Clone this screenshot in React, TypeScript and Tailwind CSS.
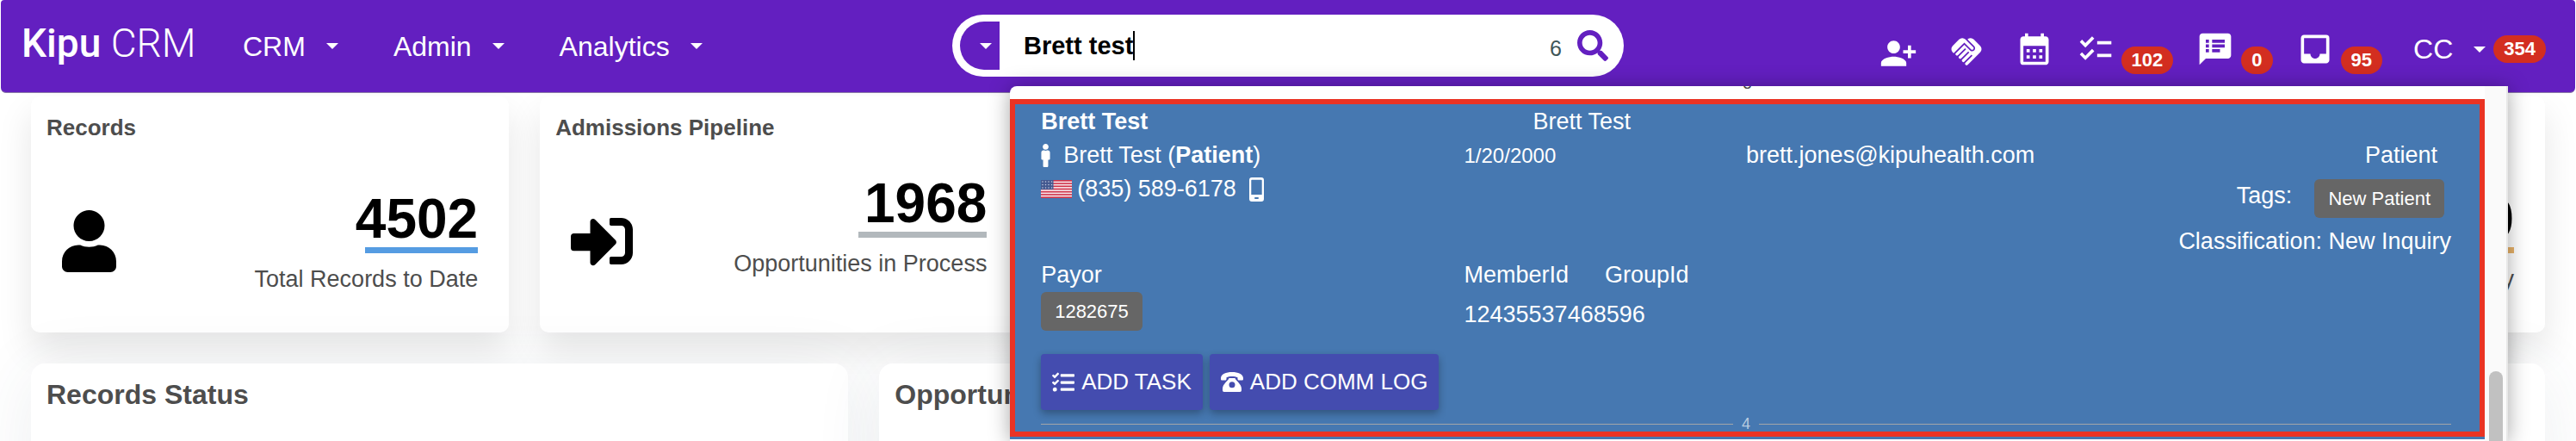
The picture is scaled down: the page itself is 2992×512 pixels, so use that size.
import React, { useState } from 'react';
import { FaMale, FaSearch, FaSignInAlt, FaTasks, FaUser } from 'react-icons/fa';
import {
  MdCalendarMonth,
  MdChecklist,
  MdHandshake,
  MdInbox,
  MdPersonAddAlt1,
  MdSpeakerNotes
} from 'react-icons/md';

interface StatCard {
  title?: string;
  icon?: React.ReactNode;
  value?: string;
  label?: string;
  barClass?: string;
  offsetClass?: string;
}

const menus = ['CRM', 'Admin', 'Analytics'];

const statCards: StatCard[] = [
  {
    title: 'Records',
    icon: <FaUser className="h-[72px] w-[63px]" />,
    value: '4502',
    label: 'Total Records to Date',
    barClass: 'w-[131px] bg-[#559ce2]',
    offsetClass: 'pt-[18px]'
  },
  {
    title: 'Admissions Pipeline',
    icon: <FaSignInAlt size={72} />,
    value: '1968',
    label: 'Opportunities in Process',
    barClass: 'w-[149px] bg-[#b2b8bc]',
    offsetClass: 'pt-0'
  },
  {},
  {},
  {
    value: '0',
    label: 'y',
    barClass: 'w-[131px] bg-[#e8b268]',
    offsetClass: 'pt-[18px]'
  }
];

const statusCards = ['Records Status', 'Opportunities', ''];

const Caret: React.FC = () => (
  <span className="h-0 w-0 border-x-[7px] border-t-[7px] border-x-transparent border-t-white" />
);

const Badge: React.FC<{ count: number; className: string }> = ({ count, className }) => (
  <span
    className={`h-8 rounded-full bg-[#d32e20] px-3 text-[22px] leading-8 font-bold text-white ${className}`}
  >
    {count}
  </span>
);

const Tag: React.FC<{ children: React.ReactNode }> = ({ children }) => (
  <span className="inline-block rounded-md bg-[#666666] px-4 text-[22px] leading-[45px]">
    {children}
  </span>
);

const UsFlag: React.FC = () => (
  <svg width="36" height="21" viewBox="0 0 36 21" aria-hidden="true">
    <rect width="36" height="21" fill="#f7e9ec" />
    {[0, 1, 2, 3, 4, 5, 6].map((i) => (
      <rect key={i} y={i * 3.23} width="36" height="1.62" fill="#d0344a" />
    ))}
    <rect width="14.5" height="11" fill="#43588f" />
    {[2, 5.5, 9].map((y) =>
      [2, 5.5, 9, 12.5].map((x) => <circle key={`${x}-${y}`} cx={x} cy={y} r="0.8" fill="#c3cbe0" />)
    )}
  </svg>
);

const MobileIcon: React.FC = () => (
  <svg width="17" height="28" viewBox="0 0 17 28" fill="white" aria-hidden="true">
    <path
      fillRule="evenodd"
      d="M3 0h11a3 3 0 0 1 3 3v22a3 3 0 0 1-3 3H3a3 3 0 0 1-3-3V3a3 3 0 0 1 3-3zM3 2.7a.7.7 0 0 0-.7.7V20h12.4V3.4a.7.7 0 0 0-.7-.7zM7 23a1 1 0 0 0 0 2h3a1 1 0 0 0 0-2z"
    />
  </svg>
);

const DeskPhoneIcon: React.FC = () => (
  <svg width="26" height="23" viewBox="0 0 26 23" fill="white" aria-hidden="true">
    <path d="M0 7C0 2.5 6 0 13 0s13 2.500 13 7v1c0 1-.6 1.500-1.500 1.500h-3.500c-1 0-1.500-.6-1.500-1.500V6.200C16 4.600 10 4.600 6.500 6.200V8c0 .9-.5 1.500-1.500 1.500H1.500C.6 9.500 0 9 0 8z" />
    <path
      fillRule="evenodd"
      d="M9.500 7h7c.5 2.500 7.500 7 7.500 12v2c0 1.200-.6 2-1.800 2H3.800C2.600 23 2 22.200 2 21v-2C2 14 9 9.500 9.500 7zM13 11.200a3.500 3.500 0 1 0 0 7 3.500 3.500 0 0 0 0-7z"
    />
  </svg>
);

const Header: React.FC = () => {
  const [query, setQuery] = useState('Brett test');

  return (
    <header className="relative z-10 mx-px grid h-[108px] grid-cols-[1fr_780px_1fr] rounded-t-sm rounded-b-md border-b border-[#8a7ba8] bg-[#631fc0] text-[32px] text-white">
      {/* Logo and menus */}
      <div className="flex items-center pl-6">
        <a href="#" className="w-[257px] pb-2 font-[Roboto] text-[46px] leading-[52px] whitespace-nowrap">
          <span className="font-medium">Kipu</span> <span className="font-light">CRM</span>
        </a>
        <nav className="flex gap-16">
          {menus.map((menu) => (
            <button key={menu} className="flex items-center gap-6">
              {menu}
              <Caret />
            </button>
          ))}
        </nav>
      </div>

      {/* Search */}
      <div className="mt-[17px] flex h-[72px] items-center rounded-full bg-white pr-[18px] pl-[9px]">
        <button
          aria-label="Search options"
          className="flex h-14 w-[46px] items-center justify-end rounded-l-full rounded-r-md bg-[#631fc0] pr-[9px]"
        >
          <Caret />
        </button>
        <input
          type="text"
          aria-label="Search"
          value={query}
          onChange={(e) => setQuery(e.target.value)}
          className="ml-7 field-sizing-content text-[29px] leading-9 font-bold text-black outline-none"
        />
        <span className="h-[34px] w-[2px] bg-black" />
        <span className="mt-2 mr-[18px] ml-auto text-[25px] text-[#3f5658]">6</span>
        <button aria-label="Run search" className="text-[#631fc0]">
          <FaSearch size={36} />
        </button>
      </div>

      {/* Shortcuts */}
      <div className="flex items-start justify-end pt-[35px] pr-[34px] leading-[44px]">
        <a href="#" aria-label="Add person" className="mr-9 pt-[5px]">
          <MdPersonAddAlt1 size={44} />
        </a>
        <a href="#" aria-label="Partners" className="mr-9 pt-1">
          <MdHandshake size={42} />
        </a>
        <a href="#" aria-label="Calendar" className="mr-[27px]">
          <MdCalendarMonth size={44} />
        </a>
        <a href="#" aria-label="Tasks" className="mr-[27px] flex gap-2">
          <MdChecklist size={44} />
          <Badge count={102} className="mt-[19px]" />
        </a>
        <a href="#" aria-label="Notes" className="mr-[27px] flex gap-2">
          <MdSpeakerNotes size={44} />
          <Badge count={0} className="mt-[19px]" />
        </a>
        <a href="#" aria-label="Inbox" className="mr-9 flex gap-2">
          <MdInbox size={44} />
          <Badge count={95} className="mt-[19px]" />
        </a>
        <button className="flex items-center">
          <span className="mr-6">CC</span>
          <Caret />
          <Badge count={354} className="ml-[9px]" />
        </button>
      </div>
    </header>
  );
};

const SearchResults: React.FC = () => (
  <div className="absolute top-[100px] right-[79px] bottom-0 z-20 flex w-[58.15%] overflow-hidden rounded-tl-lg bg-white text-[27px] leading-[39px] text-white shadow-[0_2px_24px_rgba(0,0,0,0.35)]">
    <div className="min-w-0 flex-1">
      {/* Tail of the previous result, scrolled out of view */}
      <div className="flex h-[15px] items-start justify-center overflow-hidden">
        <span className="-mt-[13px] text-[18px] leading-5 text-[#444444]">3</span>
      </div>

      <div className="border-[6px] border-[#ea3323] bg-[#4678b1] pt-px pr-[33px] pl-[30px]">
        <div className="grid grid-cols-[30%_20%_1fr_auto]">
          <div>
            <p className="font-bold">Brett Test</p>
            <p className="flex items-center">
              <FaMale size={27} className="mr-[7px] -ml-2" />
              <span>
                Brett Test (<b>Patient</b>)
              </span>
            </p>
            <p className="flex items-center">
              <UsFlag />
              <span className="mr-[15px] ml-[6px]">(835) 589-6178</span>
              <MobileIcon />
            </p>
          </div>
          <div>
            <p className="pl-20">Brett Test</p>
            <p className="text-[24px]">1/20/2000</p>
          </div>
          <p className="pt-[39px]">brett.jones@kipuhealth.com</p>
          <div className="pt-[39px] text-right">
            <p className="pr-4">Patient</p>
            <div className="mt-2 mb-2 flex items-start justify-end pr-2">
              <span className="mr-[26px]">Tags:</span>
              <Tag>New Patient</Tag>
            </div>
            <p>Classification: New Inquiry</p>
          </div>
        </div>

        <div className="grid grid-cols-[30%_1fr]">
          <div>
            <p>Payor</p>
            <Tag>1282675</Tag>
          </div>
          <div>
            <p className="flex gap-[42px]">
              <span>MemberId</span>
              <span>GroupId</span>
            </p>
            <p className="mt-[7px]">12435537468596</p>
          </div>
        </div>

        <div className="mt-[26px] flex gap-2 text-[26px]">
          <button className="flex h-[65px] items-center gap-2 rounded bg-[#444caf] px-[13px] shadow-[0_4px_10px_rgba(0,0,0,0.3)]">
            <FaTasks size={26} />
            ADD TASK
          </button>
          <button className="flex h-[65px] items-center gap-2 rounded bg-[#444caf] px-[13px] shadow-[0_4px_10px_rgba(0,0,0,0.3)]">
            <DeskPhoneIcon />
            ADD COMM LOG
          </button>
        </div>

        <div className="mt-[7px] flex h-[18px] items-center gap-[10px] text-[18px] leading-[18px] text-[#b9cbe0]">
          <span className="h-px flex-1 bg-[#a3a5a8]" />
          4
          <span className="h-px flex-1 bg-[#a3a5a8]" />
        </div>
      </div>
      <div className="h-[3px] bg-[#4678b1]" />
    </div>

    {/* Scrollbar */}
    <div className="w-[27px] border-r-2 border-[#e8e8e8] bg-[#fafafa] pt-[331px] pl-[5px]">
      <div className="h-60 w-4 rounded-full bg-[#c1c1c1]" />
    </div>
  </div>
);

const App: React.FC = () => {
  return (
    <div className="relative h-screen overflow-hidden bg-white font-['Liberation_Sans',Arial,sans-serif]">
      <Header />
      <SearchResults />

      <main className="px-9 pt-1 text-[#4d4d4d]">
        {/* Totals */}
        <div className="grid grid-cols-5 gap-9">
          {statCards.map((card, index) => (
            <section
              key={index}
              className="h-[274px] rounded-[10px] bg-white pt-5 shadow-[0_20px_40px_rgba(0,0,0,0.1)]"
            >
              <h2 className="h-8 pl-[18px] text-[26px] leading-8 font-bold">{card.title}</h2>
              <div className="mt-10 flex items-start justify-between px-9">
                <div className="pt-10 text-black">{card.icon}</div>
                {card.value && (
                  <div className={`flex flex-col items-end ${card.offsetClass}`}>
                    <p className="text-[64px] leading-[64px] font-bold text-black">{card.value}</p>
                    <span className={`mt-px h-[7px] ${card.barClass}`} />
                    <p className="mt-[14px] text-[27px] leading-8">{card.label}</p>
                  </div>
                )}
              </div>
            </section>
          ))}
        </div>

        {/* Status panels */}
        <div className="mt-9 grid grid-cols-3 gap-9">
          {statusCards.map((title, index) => (
            <section
              key={index}
              className="h-96 rounded-2xl bg-white pt-4 pl-[18px] shadow-[0_10px_80px_rgba(50,75,105,0.09)]"
            >
              <h2 className="text-[32px] leading-10 font-bold">{title}</h2>
            </section>
          ))}
        </div>
      </main>
    </div>
  );
};

export default App;
